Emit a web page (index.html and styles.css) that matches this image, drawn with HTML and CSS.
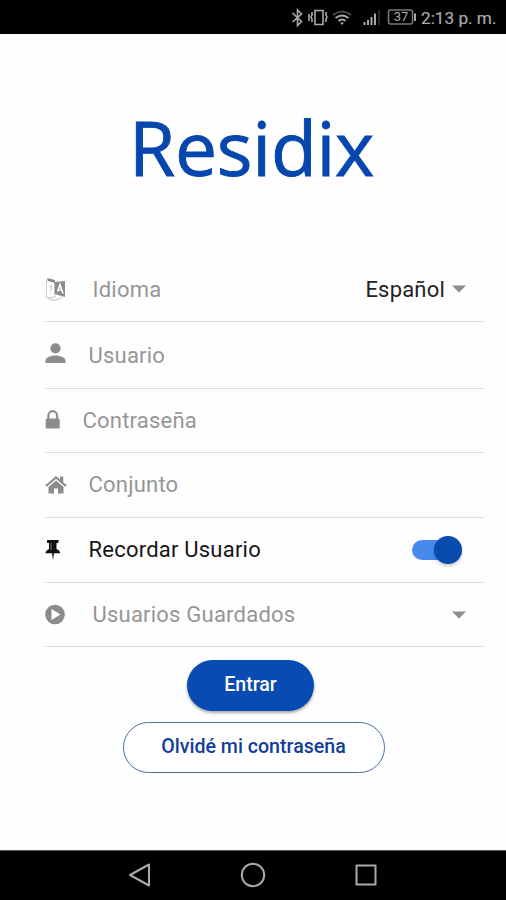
FILE: index.html
```html
<!DOCTYPE html>
<html lang="es">
<head>
<meta charset="utf-8">
<meta name="viewport" content="width=device-width">
<title>Residix</title>
<link rel="stylesheet" href="styles.css">
</head>
<body>
<header class="status">
  <svg class="status-icons" width="126" height="34" viewBox="290 0 126 34" fill="none" stroke="#aaa" stroke-width="1.6">
    <path d="M292.500 13l9 8.500-4 4V10l4 4-9 8"/>
    <path d="M315 10.500h8v14h-8z"/>
    <path d="M312 12v3l-1 2 1 2v3M309 14v7M326 12v3l1 2-1 2v3"/>
    <path d="M333 15q9-7 18 0" stroke="#555"/>
    <path d="M335.500 18q6.500-5 13 0M338.500 21q3.500-3 7 0" stroke-width="2"/>
    <path d="M340 22.500h4l-2 2.500z" fill="#aaa" stroke="none"/>
    <path d="M364.500 22v3M368 20v5M371.500 17v8M375 13.500v11.500" stroke-width="2"/>
    <path d="M379 10v15" stroke="#333"/>
    <rect x="388.500" y="10" width="24" height="14" rx="2" stroke="#777"/>
    <path d="M415 13.500v7.500" stroke-width="2"/>
  </svg>
  <div class="battery">37</div>
  <time class="clock">2:13 p. m.</time>
</header>
<main class="screen">
  <h1 class="logo">Residix</h1>
  <form class="form">
    <div class="row row-language">
      <svg class="icon" width="24" height="26" viewBox="0 0 24 26">
        <path d="M1.500 4l8.500 2v15l-8.500 1z" fill="#fff" stroke="#ccc"/>
        <path d="M2 2l8 2v3L3 5z" fill="#888"/>
        <path d="M9.500 6l10.500-1v16l-10.500-3z" fill="#8c8c8c"/>
        <path d="M12.500 15.500l2.500-7 3 9M13.500 14h3.500" fill="none" stroke="#fff" stroke-width="1.500"/>
        <path d="M4 11q3-2 3 0t-2 4M5 17v1M3 22q6 5 14-1" fill="none" stroke="#bbb"/>
      </svg>
      <span class="label inset">Idioma</span>
      <span class="value">Español</span>
      <svg class="caret" width="14" height="8" viewBox="0 0 14 8"><path d="M0 .5h14L7 7.500z"/></svg>
    </div>
    <div class="row row-user">
      <svg class="icon" width="24" height="26" viewBox="0 0 24 26" fill="#8c8c8c"><circle cx="10.500" cy="6.300" r="5.100"/><path d="M.5 21v-2.500c0-3.300 6.500-5 10-5s10 1.700 10 5V21z"/></svg>
      <span class="label">Usuario</span>
    </div>
    <div class="row">
      <svg class="icon" width="24" height="26" viewBox="0 0 24 26"><rect x=".7" y="10.500" width="14" height="10" rx="1.200" fill="#8c8c8c"/><path d="M3.400 11.500V7.500a4.300 4.300 0 0 1 8.600 0v4" fill="none" stroke="#8c8c8c" stroke-width="2.200"/></svg>
      <span class="label outset">Contraseña</span>
    </div>
    <div class="row">
      <svg class="icon" width="24" height="26" viewBox="0 0 24 26" fill="#8c8c8c"><path d="M1 14L11 5.500l10 8.500" fill="none" stroke="#8c8c8c" stroke-width="2.200"/><path d="M15 4.500h3.200v7L15 9.500zM11 8.500l7.500 6.500v6.500H13V16.500H9v5H3.500V15z"/></svg>
      <span class="label">Conjunto</span>
    </div>
    <div class="row">
      <svg class="icon" width="24" height="26" viewBox="0 0 24 26"><path d="M2 3h11.500v3h-2v6c3 1.200 3.500 2.500 3.500 4.200H9l-1 7-1-7H.5c0-1.700 1-3 3.500-4.200V6H2z" fill="#111"/><path d="M6 6v7" stroke="#777"/></svg>
      <span class="label dark">Recordar Usuario</span>
      <span class="switch"><span class="thumb"></span></span>
    </div>
    <div class="row">
      <svg class="icon" width="24" height="26" viewBox="0 0 24 26"><circle cx="10" cy="12.500" r="9.800" fill="#8c8c8c"/><path d="M6.500 7l9 5.500-9 5.500z" fill="#fff"/></svg>
      <span class="label inset">Usuarios Guardados</span>
      <svg class="caret" width="14" height="8" viewBox="0 0 14 8"><path d="M0 .5h14L7 7.500z"/></svg>
    </div>
  </form>
  <div class="actions">
    <button class="btn primary">Entrar</button>
    <button class="btn outline">Olvidé mi contraseña</button>
  </div>
</main>
<nav class="navbar">
  <svg width="24" height="26" viewBox="0 0 24 26"><path d="M2 13L21 2.500v21z"/></svg>
  <svg width="26" height="26" viewBox="0 0 26 26"><circle cx="13" cy="13" r="11.200"/></svg>
  <svg width="24" height="26" viewBox="0 0 24 26"><path d="M2.500 3.500h19v19h-19z"/></svg>
</nav>
</body>
</html>
```
FILE: styles.css
```css
* { box-sizing: border-box; }
body {
  margin: 0;
  height: 900px;
  display: flex;
  flex-direction: column;
  background: #fefefe;
  font-family: Roboto, sans-serif;
  overflow: hidden;
}
.status {
  height: 34px;
  background: #000;
  color: #aaa;
  display: flex;
  align-items: center;
  padding-left: 290px;
}
.status-icons { flex: none; margin-right: -27px; }
.battery { width: 24px; font-size: 13px; text-align: center; line-height: 34px; margin-right: 8px; }
.clock { font-size: 17.2px; line-height: 36px; padding-top: 1px; white-space: nowrap; -webkit-text-stroke: .2px #aaa; }
.screen { flex: 1; }
.logo {
  margin: 58px 0 0;
  padding-left: 129px;
  height: 110px;
  font: 400 75px/110px "Open Sans", sans-serif;
  letter-spacing: -.3px;
  -webkit-text-stroke: .9px #0547ae;
  color: #0547ae;
  white-space: nowrap;
}
.form { margin: 55px 22px 0 45px; }
.row {
  height: 64.7px;
  display: flex;
  align-items: center;
  border-bottom: 1.5px solid #dedede;
}
.row-user { height: 67px; }
.icon { flex: none; margin-right: 19.5px; }
.label { flex: 1; font-size: 22px; line-height: 26px; color: #969696; letter-spacing: .22px; }
.row-language .label, .row-user .label, .row-language .value { padding-top: 2px; }
.inset { padding-left: 4px; }
.outset { margin-left: -6px; }
.dark { color: #161616; }
.value { font-size: 22px; color: #222; letter-spacing: .2px; margin-right: 7px; }
.caret { fill: #8c8c8c; margin-right: 18px; }
.switch {
  width: 50px;
  height: 20px;
  margin-right: 22px;
  border-radius: 10px;
  background: #478aee;
  display: flex;
  justify-content: flex-end;
  align-items: center;
}
.thumb { width: 28px; height: 28px; border-radius: 50%; background: #084bb0; box-shadow: 0 2px 3px #0003; }
.actions { display: flex; flex-direction: column; align-items: center; padding: 13px 0 0; gap: 11px; }
.btn { font: 500 19.6px/22px Roboto, sans-serif; border-radius: 26px; padding: 0 0 1px; }
.primary { width: 127px; height: 51px; margin-right: 5px; border: 0; background: #084bb3; color: #fff; box-shadow: 0 2px 3px #0005; }
.outline { width: 262px; height: 51px; margin-left: 1px; border: 1.5px solid #456f9f; background: #fff; color: #123d9a; }
.navbar {
  height: 50px;
  background: #000;
  border-top: 1px solid #555;
  display: flex;
  align-items: center;
  justify-content: center;
  gap: 88px;
  padding: 0 0 1px;
}
.navbar svg { fill: none; stroke: #aaa; stroke-width: 2; stroke-linejoin: round; }
```
